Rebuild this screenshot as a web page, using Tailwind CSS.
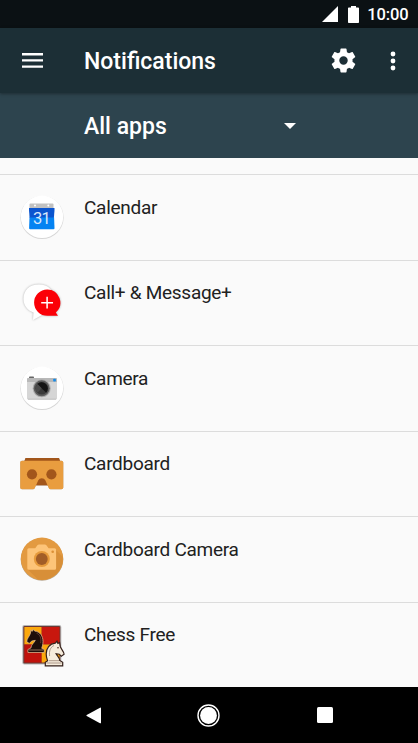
<!DOCTYPE html>
<html lang="en">
<head>
    <meta charset="UTF-8">
    <meta name="viewport" content="width=device-width, initial-scale=1.0">
    <title>Notifications</title>
    <script src="https://cdn.jsdelivr.net/npm/@tailwindcss/browser@4"></script>
</head>
<body class="h-[743px] w-[418px] flex flex-col overflow-hidden bg-[#fafafa] font-['Roboto',sans-serif]">

    <!-- Status bar -->
    <div class="h-7 shrink-0 bg-[#0b1114] flex items-center justify-end pr-[9.5px] text-white">
        <svg class="w-4 h-4 mr-[10px]" viewBox="0 0 16 16" fill="currentColor"><path d="M16 0v16H0z"/></svg>
        <svg class="w-[11px] h-[17px] mr-[8px]" viewBox="0 0 11 17" fill="currentColor"><path d="M3 0h5v1.5h2.2q.8 0 .8.8v13.9q0 .8-.8.8H.8q-.8 0-.8-.8V2.300q0-.8.8-.8H3z"/></svg>
        <span class="text-[16.5px] leading-7 pt-[2px] tracking-[-0.1px] font-medium">10:00</span>
    </div>

    <!-- App bar -->
    <header class="h-[65px] shrink-0 bg-[#1c2f36] flex items-center text-white relative shadow-[0_1px_3px_rgba(0,0,0,0.35)]">
        <svg class="w-[21px] h-[15px] ml-[22px]" viewBox="0 0 21 15" fill="currentColor"><path d="M0 0h21v2.400H0zM0 6.200h21v2.400H0zM0 12.400h21v2.400H0z"/></svg>
        <h1 class="ml-[41px] pt-1 text-[23px] font-medium">Notifications</h1>
        <svg class="w-[29px] h-[29px] ml-auto mr-[60px]" viewBox="0 0 24 24" fill="currentColor"><path d="M19.430 12.980c.04-.32.07-.64.07-.98s-.03-.66-.07-.98l2.110-1.650c.19-.15.24-.42.12-.64l-2-3.460c-.12-.22-.39-.3-.61-.22l-2.490 1c-.52-.4-1.080-.73-1.690-.98l-.38-2.650C14.460 2.180 14.250 2 14 2h-4c-.25 0-.46.18-.49.42l-.38 2.650c-.61.25-1.170.59-1.690.98l-2.490-1c-.23-.09-.49 0-.61.22l-2 3.460c-.13.22-.07.49.12.64l2.110 1.650c-.04.32-.07.65-.07.98s.03.66.07.98l-2.110 1.650c-.19.15-.24.42-.12.64l2 3.460c.12.22.39.3.61.22l2.490-1c.52.4 1.080.73 1.690.98l.38 2.650c.03.24.24.42.49.42h4c.25 0 .46-.18.49-.42l.38-2.650c.61-.25 1.170-.59 1.690-.98l2.490 1c.23.09.49 0 .61-.22l2-3.460c.12-.22.07-.49-.12-.64zM12 15.500a3.500 3.500 0 1 1 0-7 3.500 3.500 0 0 1 0 7z"/></svg>
        <svg class="absolute right-[22.500px] top-[22.500px] w-[6px] h-[20px]" viewBox="0 0 6 20" fill="currentColor"><circle cx="3" cy="3" r="2.400"/><circle cx="3" cy="10" r="2.400"/><circle cx="3" cy="17" r="2.400"/></svg>
    </header>

    <!-- Filter -->
    <div class="h-[65px] shrink-0 bg-[#2d444e] flex items-center pl-[84px] text-white">
        <span class="w-[200px] pt-1 text-[23px] font-medium">All apps</span>
        <svg class="w-[12px] h-[6px]" viewBox="0 0 12 6" fill="currentColor"><path d="M0 0h12L6 6z"/></svg>
    </div>

    <!-- App list -->
    <main class="pt-[16.3px] h-[529.3px] shrink-0 text-[19px] tracking-[-0.28px] text-[#212121]">
        <div class="h-[85.500px] border-t border-[#dcdcdc] flex pl-[18px]">
            <svg class="w-12 h-12 mt-[18.2px] mr-[18px] overflow-visible shrink-0" viewBox="0 0 48 48">
                <circle cx="24" cy="24.500" r="21.600" fill="#d6d6d6"/>
                <circle cx="24" cy="23.800" r="21.200" fill="#fff"/>
                <path d="M11.500 11.500q0-1 1-1h22q1 0 1 1V17h-24z" fill="#c1c1c1"/>
                <circle cx="17" cy="12.600" r="1" fill="#fff"/><circle cx="30.300" cy="12.600" r="1" fill="#fff"/>
                <path d="M11 15h25.500v2l-.6 8H11.600L11 17z" fill="#0b55cf"/>
                <path d="M11.500 24.500h24.600l.4 10.800q0 1-1 1H12.100q-1 0-1-1z" fill="#0583f2"/>
                <text x="23.600" y="30.800" text-anchor="middle" font-size="16.500" letter-spacing="-.6" font-family="Roboto" font-weight="400" fill="#d9e8fc">31</text>
            </svg>
            <span class="mt-[19.6px] leading-[26px]">Calendar</span>
        </div>
        <div class="h-[85.500px] border-t border-[#dcdcdc] flex pl-[18px]">
            <svg class="w-12 h-12 mt-[18.2px] mr-[18px] overflow-visible shrink-0 drop-shadow-[0_0.5px_1px_rgba(0,0,0,0.3)]" viewBox="0 0 48 48">
                <path d="M21 5.500C11 5.500 5.500 11.500 5.500 20c0 6.500 4 11.300 10 13.500L15 41l10-5.500C32.500 33 36.500 28 36.500 20.500c0-9-6.500-15-15.500-15z" fill="#fff"/>
                <path d="M29.300 10.400a13.200 13.200 0 1 0 0 26.400H40l-2.200-3.300a13.200 13.200 0 0 0-8.500-23.100z" fill="#fb0007"/>
                <path d="M29.100 17.800v11.800M23.200 23.700H35" stroke="#fff" stroke-width="1.500"/>
            </svg>
            <span class="mt-[19.3px] leading-[26px]">Call+ &amp; Message+</span>
        </div>
        <div class="h-[85.500px] border-t border-[#dcdcdc] flex pl-[18px]">
            <svg class="w-12 h-12 mt-[18.2px] mr-[18px] overflow-visible shrink-0" viewBox="0 0 48 48">
                <circle cx="24" cy="24.500" r="21.600" fill="#d6d6d6"/>
                <circle cx="24" cy="23.800" r="21.200" fill="#fff"/>
                <rect x="11" y="12.600" width="5" height="3" rx=".8" fill="#666"/>
                <rect x="9" y="14" width="30" height="21.500" rx="1.200" fill="#d6d6d6"/>
                <path d="M9 18v-2.800Q9 14 10.200 14h27.600q1.200 0 1.200 1.200V18z" fill="#b9b9b9"/>
                <path d="M10 35.200h28" stroke="#b5b5b5" stroke-width=".8"/>
                <rect x="35.200" y="14.700" width="2.700" height="2.700" rx=".6" fill="#168be8"/>
                <circle cx="23.700" cy="24.300" r="9" fill="#aaa"/>
                <circle cx="23.700" cy="24.300" r="8" fill="#5c5c5c"/>
                <circle cx="23.700" cy="24.300" r="6.300" fill="#3a3a3a"/>
                <path d="M19.200 19.900A6.300 6.300 0 0 1 28.200 28.700z" fill="#151515"/>
                <path d="M19.500 20l4.200 4.300L19.500 28.800a6.300 6.300 0 0 1 0-8.800z" fill="#4b4b4b"/>
            </svg>
            <span class="mt-[19.6px] leading-[26px]">Camera</span>
        </div>
        <div class="h-[85.500px] border-t border-[#dcdcdc] flex pl-[18px]">
            <svg class="w-12 h-12 mt-[18.2px] mr-[18px] overflow-visible shrink-0 drop-shadow-[0_0.5px_0.5px_rgba(0,0,0,0.3)]" viewBox="0 0 48 48">
                <path d="M7.500 8h33.500l1.500 4H6z" fill="#a2561b"/>
                <path d="M18 27h12v8.400H18z" fill="#a2561b"/>
                <path d="M4 10.800h39.500q1.800 0 1.800 1.800v24.800q0 1.800-1.800 1.800H32.500q-1.200 0-1.600-1l-3.600-8q-1-2-3.500-2t-3.500 2l-3.600 8q-.5 1-1.700 1H4q-1.800 0-1.800-1.800V12.600q0-1.800 1.800-1.800z" fill="#e99d3f"/>
                <circle cx="14" cy="24.300" r="5.100" fill="#a2561b"/><circle cx="33.400" cy="24.300" r="5.100" fill="#a2561b"/>
            </svg>
            <span class="mt-[19.3px] leading-[26px]">Cardboard</span>
        </div>
        <div class="h-[85.500px] border-t border-[#dcdcdc] flex pl-[18px]">
            <svg class="w-12 h-12 mt-[18.2px] mr-[18px] overflow-visible shrink-0" viewBox="0 0 48 48">
                <circle cx="24" cy="24.400" r="21.300" fill="#b8a58c"/>
                <circle cx="24" cy="23.800" r="21.200" fill="#e39a40"/>
                <path d="M38 15l6.700 6.700A21.200 21.200 0 0 1 20 44.600L9.800 34.500z" fill="#d88f38"/>
                <path d="M10.800 13.200h6.400l2.400-3.200q.5-.6 1.300-.6h6q.8 0 1.300.6l2.400 3.200h6q1.500 0 1.500 1.500v18.600q0 1.500-1.500 1.500H10.800q-1.500 0-1.500-1.500V14.700q0-1.500 1.500-1.500z" fill="#fdc478"/>
                <circle cx="23.800" cy="24" r="8" fill="#e69a3b"/>
                <circle cx="23.800" cy="24" r="5.900" fill="#a25d27"/>
                <circle cx="34.700" cy="16.700" r="1.300" fill="#dc9036"/>
            </svg>
            <span class="mt-[19.6px] leading-[26px]">Cardboard Camera</span>
        </div>
        <div class="h-[85.500px] border-t border-[#dcdcdc] flex pl-[18px]">
            <svg class="w-12 h-12 mt-[18.2px] mr-[18px] overflow-visible shrink-0" viewBox="0 0 48 48">
                <rect x="4.300" y="4" width="39" height="39.500" rx="2" fill="#b5b5b5"/>
                <rect x="5.300" y="4.900" width="37" height="37.500" rx="1.200" fill="#6b3a35"/>
                <path d="M6.400 6h17.300v17.500H6.400z" fill="#fca80c"/>
                <path d="M23.700 6H41.500v17.500H23.700z" fill="#c8170e"/>
                <path d="M6.400 23.500h17.300v18H6.400z" fill="#c0120c"/>
                <path d="M23.700 23.500H41.500v18H23.700z" fill="#fca80c"/>
                <!-- knights -->
                <path d="M15 8.300l1.700 1.800c5.200.5 8.300 4.700 8.300 10.400 0 3-.8 5-1.300 6.800l2.500 1.200v3H9.900v-3l3-1.500c.2-3.500 3.200-5 4.400-7.700l-3.400.7-2.700 2.400-2.500-1.800c.2-3.200 2.900-5.300 3.800-8.500l.2-3 1.500 1.300z" fill="#1d0e0b" stroke="#e9c49a" stroke-width=".7"/>
                <path d="M18.500 12.200c3.700 1.500 5 5 4.100 10" fill="none" stroke="#71483b" stroke-width=".8"/>
                <path d="M11 29h14" stroke="#c29a7b" stroke-width=".7"/>
                <path d="M39 20.200l-1.700 1.900c-5.700.5-9.200 5-9.100 11 0 3 .8 4.800 1.400 6.700l-2.300 1.500v3.500h17.400v-3.500l-3-1.800c-.2-3.300-2.600-4.600-3.600-6.800l3.200.5 2 2 2.800-1.900c-.2-3.300-3.100-5-3.900-8.100l-.6-3.800-1.700 1z" fill="#f6ecdc" stroke="#35201a" stroke-width="1.200"/>
                <path d="M36 24.500c-3.700 1.800-5 5.500-4.400 10.500M31 39.700h10M28.500 42h15" fill="none" stroke="#9b8474" stroke-width=".8"/>
                <circle cx="40" cy="26.800" r=".8" fill="#46291f"/>
            </svg>
            <span class="mt-[19.3px] leading-[26px]">Chess Free</span>
        </div>
    </main>

    <!-- Navigation bar -->
    <nav class="grow bg-black flex items-center text-white pl-[85.500px]">
        <svg class="w-[15px] h-[17px]" viewBox="0 0 15 17" fill="currentColor"><path d="M15 1.300v14.400q0 1-1 .5L.7 9.100Q0 8.500.7 7.900L14 .7q1-.4 1 .6z"/></svg>
        <svg class="w-[23px] h-[23px] ml-[96.500px]" viewBox="0 0 23 23"><circle cx="11.500" cy="11.500" r="10.500" fill="none" stroke="currentColor" stroke-width="1.400"/><circle cx="11.500" cy="11.500" r="8.400" fill="currentColor"/></svg>
        <div class="w-4 h-4 ml-[97px] rounded-[1.500px] bg-white"></div>
    </nav>

</body>
</html>
